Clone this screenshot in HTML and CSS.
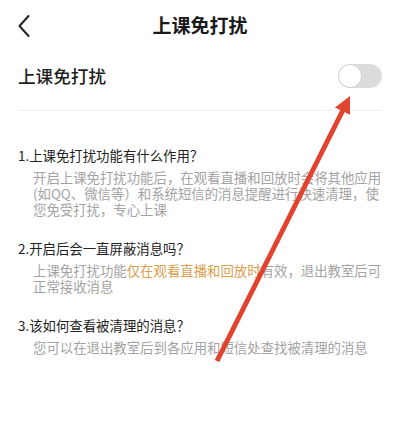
FILE: index.html
```html
<!DOCTYPE html>
<html lang="zh-CN">
<head>
<meta charset="utf-8">
<title>上课免打扰</title>
<link rel="stylesheet" href="styles.css">
</head>
<body>
<div class="page">
  <header class="nav">
    <svg class="back" width="14" height="24" viewBox="0 0 14 24"><path d="M11.5 2 L2.5 12 L11.5 22" fill="none" stroke="#222" stroke-width="2" stroke-linecap="round" stroke-linejoin="round"/></svg>
    <h1 class="title">上课免打扰</h1>
  </header>
  <div class="row">
    <span class="row-label">上课免打扰</span>
    <span class="switch"><span class="knob"></span></span>
  </div>
  <main class="faq">
    <section class="item">
      <h2 class="q">1.上课免打扰功能有什么作用？</h2>
      <p class="a">开启上课免打扰功能后，在观看直播和回放时会将其他应用(如QQ、微信等）和系统短信的消息提醒进行快速清理，使您免受打扰，专心上课</p>
    </section>
    <section class="item">
      <h2 class="q">2.开启后会一直屏蔽消息吗？</h2>
      <p class="a">上课免打扰功能<span class="hl">仅在观看直播和回放时</span>有效，退出教室后可正常接收消息</p>
    </section>
    <section class="item">
      <h2 class="q">3.该如何查看被清理的消息？</h2>
      <p class="a">您可以在退出教室后到各应用和短信处查找被清理的消息</p>
    </section>
  </main>
  <svg class="arrow" width="400" height="427" viewBox="0 0 400 427">
    <line x1="217" y1="361" x2="343" y2="110" stroke="#e1442e" stroke-width="5" stroke-linecap="butt"/>
    <polygon points="350,96 335,107.6 350,114.8" fill="#e1442e"/>
  </svg>
</div>
</body>
</html>
```
FILE: styles.css
```css
* { box-sizing: border-box; }
html, body { margin: 0; padding: 0; background: #fff; }
body {
  font-family: "Noto Sans CJK SC", "Noto Sans", sans-serif;
  color: #222;
}
.page {
  position: relative;
  width: 400px;
  height: 427px;
  overflow: hidden;
}
.nav {
  height: 50px;
  display: flex;
  align-items: center;
  justify-content: center;
  position: relative;
}
.back {
  position: absolute;
  left: 17px;
  top: 14px;
}
.title {
  margin: 0;
  font-size: 19px;
  font-weight: 700;
  line-height: 24px;
  color: #1a1a1a;
}
.row {
  margin: 0 18px;
  height: 61px;
  padding-bottom: 8px;
  display: flex;
  align-items: center;
  justify-content: space-between;
  border-bottom: 1px solid #eeeeee;
}
.row-label {
  font-size: 17.6px;
  font-weight: 500;
  line-height: 24px;
  color: #1f1f1f;
}
.switch {
  width: 44px;
  height: 24px;
  border-radius: 12px;
  background: #dcdcdc;
  display: flex;
  align-items: center;
  padding: 1px;
  margin-right: 0;
}
.knob {
  width: 22px;
  height: 22px;
  border-radius: 50%;
  background: #fff;
  box-shadow: 0 0 0 0.5px #c8c8c8;
}
.faq {
  padding: 34px 18px 0 18px;
}
.item + .item { margin-top: 21px; }
.q {
  margin: 0;
  font-size: 13.4px;
  font-weight: 400;
  line-height: 20px;
  color: #222;
}
.a {
  margin: 4px 0 0 15px;
  width: 352px;
  font-size: 13.4px;
  line-height: 16px;
  color: #a3a3a3;
}
.hl { color: #d9a04e; }
.arrow {
  position: absolute;
  left: 0;
  top: 0;
  pointer-events: none;
}
```
